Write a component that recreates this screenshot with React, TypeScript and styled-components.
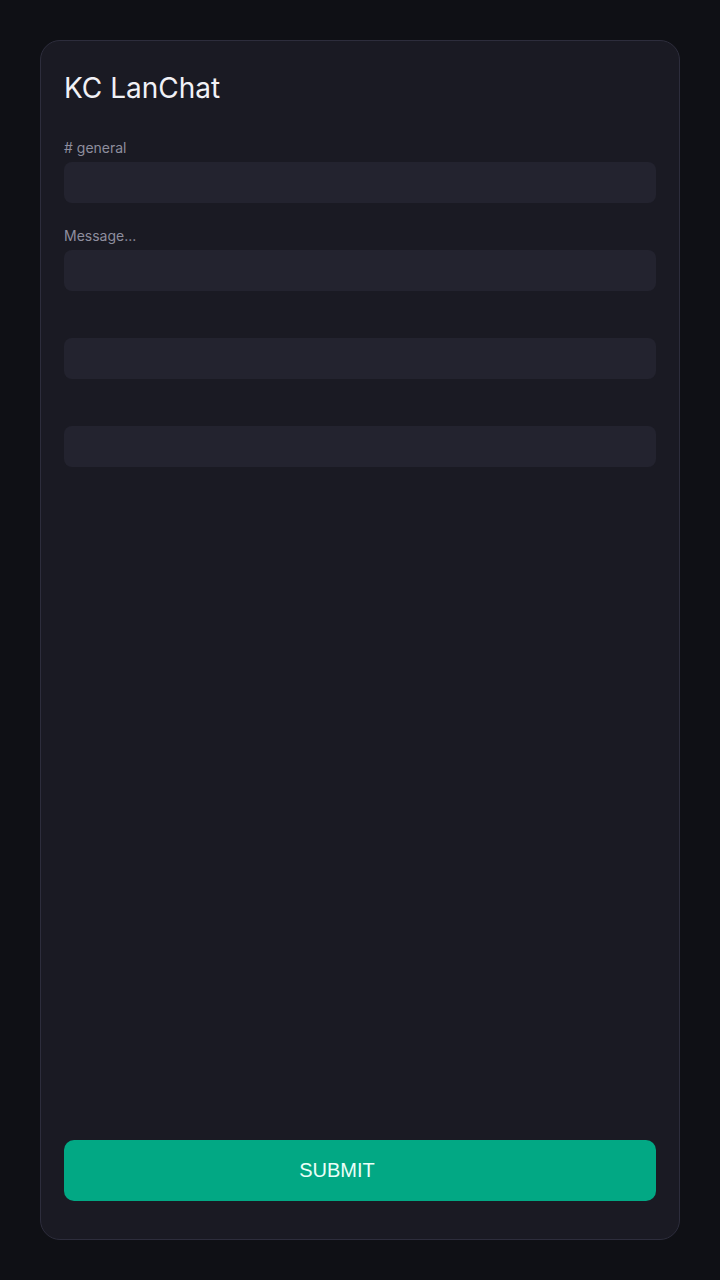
import React from "react";
import styled, { createGlobalStyle } from "styled-components";

const GlobalStyle = createGlobalStyle`
  html, body {
    margin: 0;
    padding: 0;
    background: #0f1015;
  }
  * {
    box-sizing: border-box;
  }
`;

const Page = styled.div`
  width: 720px;
  height: 1280px;
  padding: 40px;
  background: #0f1015;
`;

const Card = styled.form`
  display: flex;
  flex-direction: column;
  height: 100%;
  padding: 27px 23px 38px;
  background: #1a1a23;
  border: 1px solid #2d2d3c;
  border-radius: 20px;
  font-family: Inter, "Liberation Sans", sans-serif;
`;

const Title = styled.h1`
  margin: 0 0 31px;
  font-size: 28px;
  font-weight: 400;
  line-height: 40px;
  color: #f1f1f6;
`;

const Field = styled.div`
  display: flex;
  flex-direction: column;
  gap: 6px;
  margin-bottom: 24px;
`;

const Label = styled.label`
  min-height: 17px;
  font-size: 14px;
  line-height: 17px;
  color: #8e8e9e;
`;

const Input = styled.input`
  height: 41px;
  padding: 0 12px;
  border: none;
  border-radius: 8px;
  background: #23232f;
  color: #f1f1f6;
  font: inherit;
  outline: none;
`;

const SubmitButton = styled.button`
  margin-top: auto;
  height: 61px;
  padding: 0 46px 0 0;
  border: none;
  border-radius: 10px;
  background: #02a884;
  color: #eafff8;
  font-family: "Liberation Sans", Arial, sans-serif;
  font-size: 20px;
  cursor: pointer;
`;

const fields = ["# general", "Message...", "", ""];

const App = () => {
  return (
    <Page>
      <GlobalStyle />
      <Card onSubmit={(e) => e.preventDefault()}>
        <Title>KC LanChat</Title>
        {fields.map((label, i) => (
          <Field key={i}>
            <Label>{label}</Label>
            <Input />
          </Field>
        ))}
        <SubmitButton type="submit">SUBMIT</SubmitButton>
      </Card>
    </Page>
  );
};

export default App;
